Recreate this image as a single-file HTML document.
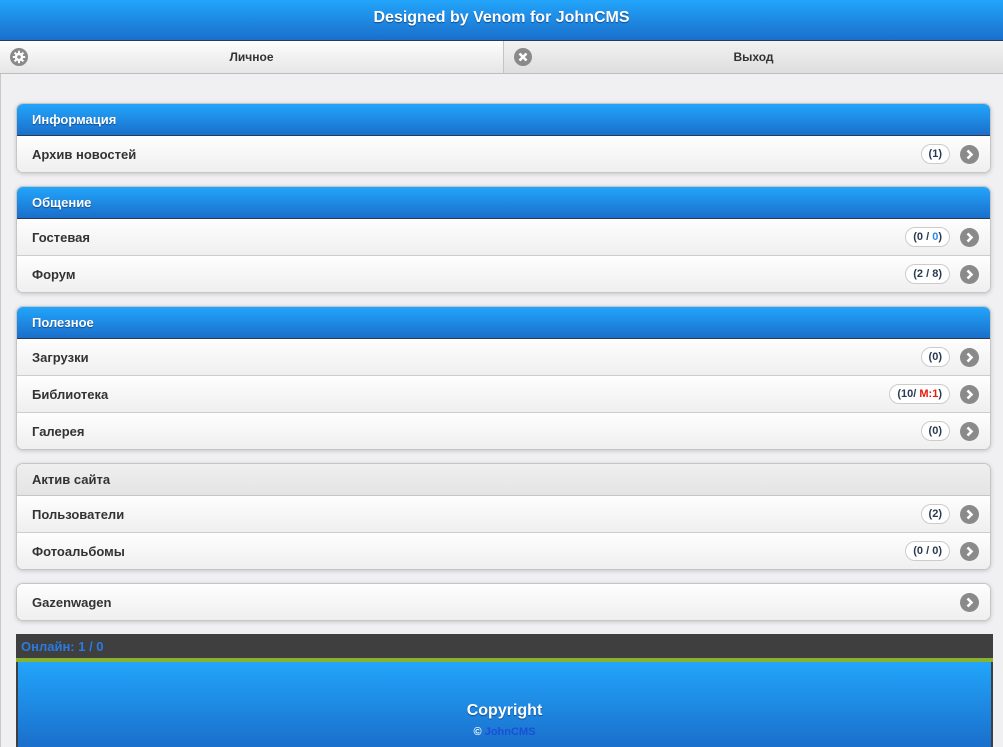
<!DOCTYPE html>
<html><head><meta charset="utf-8"><style>
*{margin:0;padding:0;box-sizing:border-box}
body{width:1003px;height:747px;overflow:hidden;background:#f0f0f2;font-family:"Liberation Sans",Arial,sans-serif;position:relative}
.abs{position:absolute}
#lb{left:0;top:74px;width:1px;height:673px;background:#c8c8c8}
#hdr{left:0;top:0;width:1003px;height:41px;background:linear-gradient(#22a5fb,#1a6fcb);border-bottom:1px solid #2a3a50;color:#fff;font-weight:bold;font-size:16px;text-align:center;line-height:36px;text-shadow:0 1px 1px #124a8a}
.nav{top:41px;height:33px;background:linear-gradient(#fdfdfd,#e6e6e6);border-bottom:1px solid #bdbdbd;font-size:12px;color:#333;text-align:center;line-height:32px;font-weight:bold}
.nav svg{position:absolute;left:10px;top:7px}
.list{left:16px;width:975px;border:1px solid #c6c6c6;border-radius:7px;overflow:hidden;box-shadow:0 1px 4px rgba(0,0,0,.18);background:#fff}
.bh{height:32px;background:linear-gradient(#22a5fb,#1a6fcb);border-bottom:1px solid #2a3a50;color:#fff;font-weight:bold;font-size:13px;line-height:31px;padding-left:15px;text-shadow:0 1px 1px #124a8a}
.gh{height:32px;background:linear-gradient(#efefef,#e4e4e4);border-bottom:1px solid #c6c6c6;color:#333;font-weight:bold;font-size:13px;line-height:31px;padding-left:15px}
.row{height:37px;background:linear-gradient(#fefefe,#efefef);border-bottom:1px solid #cdcdcd;position:relative;font-weight:bold;font-size:13px;color:#333;line-height:37px;padding-left:15px}
.row:last-child{border-bottom:none;height:36px}
.cnt{position:absolute;right:40px;top:8px;height:20px;line-height:18px;border:1px solid #ccc;border-radius:10px;background:#fff;font-size:11px;padding:0 7px;color:#2a3a50}
.arr{position:absolute;right:11px;top:9px}
#ft1{left:16px;top:634px;width:977px;height:24px;background:#3f3f3f;color:#2a7be0;font-weight:bold;font-size:13px;line-height:25px;padding-left:5px}
#ft2{left:16px;top:658px;width:977px;height:4px;background:#8bb22f}
#ft3{left:16px;top:662px;width:977px;height:85px;background:linear-gradient(#22a5fb,#1a6fcb);border-left:2px solid #3f3f3f;border-right:2px solid #3f3f3f;text-align:center;color:#fff}
</style></head><body>
<div id="lb" class="abs"></div>
<div id="hdr" class="abs">Designed by Venom for JohnCMS</div>
<div class="abs nav" style="left:0;width:504px;border-right:1px solid #c4c4c4"><svg width="18" height="18" viewBox="0 0 18 18"><circle cx="9" cy="9" r="9" fill="#8a8a8a"/><g fill="#fff"><circle cx="9" cy="9" r="4.2"/><rect x="8" y="2.8" width="2" height="12.4"/><rect x="2.8" y="8" width="12.4" height="2"/><rect x="8" y="2.8" width="2" height="12.4" transform="rotate(45 9 9)"/><rect x="8" y="2.8" width="2" height="12.4" transform="rotate(-45 9 9)"/></g><circle cx="9" cy="9" r="1.8" fill="#8a8a8a"/></svg>Личное</div>
<div class="abs nav" style="left:504px;width:499px;background:linear-gradient(#f2f2f2,#dedede)"><svg width="18" height="18" viewBox="0 0 18 18"><circle cx="9" cy="9" r="9" fill="#8a8a8a"/><path d="M5.5 5.5L12.5 12.5M12.5 5.5L5.5 12.5" stroke="#fff" stroke-width="2.6"/></svg>Выход</div>

<div class="abs list" style="top:103px"><div class="bh">Информация</div>
<div class="row">Архив новостей<span class="cnt">(1)</span><svg class="arr" width="19" height="19"><circle cx="9.5" cy="9.5" r="9.5" fill="#8a8a8a"/><path d="M7.5 5.5L11.5 9.5L7.5 13.5" stroke="#fff" stroke-width="2.6" fill="none"/></svg></div></div>

<div class="abs list" style="top:186px"><div class="bh">Общение</div>
<div class="row">Гостевая<span class="cnt">(0 / <span style="color:#2a8ae8">0</span>)</span><svg class="arr" width="19" height="19"><circle cx="9.5" cy="9.5" r="9.5" fill="#8a8a8a"/><path d="M7.5 5.5L11.5 9.5L7.5 13.5" stroke="#fff" stroke-width="2.6" fill="none"/></svg></div>
<div class="row">Форум<span class="cnt">(2 / 8)</span><svg class="arr" width="19" height="19"><circle cx="9.5" cy="9.5" r="9.5" fill="#8a8a8a"/><path d="M7.5 5.5L11.5 9.5L7.5 13.5" stroke="#fff" stroke-width="2.6" fill="none"/></svg></div></div>

<div class="abs list" style="top:306px"><div class="bh">Полезное</div>
<div class="row">Загрузки<span class="cnt">(0)</span><svg class="arr" width="19" height="19"><circle cx="9.5" cy="9.5" r="9.5" fill="#8a8a8a"/><path d="M7.5 5.5L11.5 9.5L7.5 13.5" stroke="#fff" stroke-width="2.6" fill="none"/></svg></div>
<div class="row">Библиотека<span class="cnt">(10/ <span style="color:#e8180c">M:1</span>)</span><svg class="arr" width="19" height="19"><circle cx="9.5" cy="9.5" r="9.5" fill="#8a8a8a"/><path d="M7.5 5.5L11.5 9.5L7.5 13.5" stroke="#fff" stroke-width="2.6" fill="none"/></svg></div>
<div class="row">Галерея<span class="cnt">(0)</span><svg class="arr" width="19" height="19"><circle cx="9.5" cy="9.5" r="9.5" fill="#8a8a8a"/><path d="M7.5 5.5L11.5 9.5L7.5 13.5" stroke="#fff" stroke-width="2.6" fill="none"/></svg></div></div>

<div class="abs list" style="top:463px"><div class="gh">Актив сайта</div>
<div class="row">Пользователи<span class="cnt">(2)</span><svg class="arr" width="19" height="19"><circle cx="9.5" cy="9.5" r="9.5" fill="#8a8a8a"/><path d="M7.5 5.5L11.5 9.5L7.5 13.5" stroke="#fff" stroke-width="2.6" fill="none"/></svg></div>
<div class="row">Фотоальбомы<span class="cnt">(0 / 0)</span><svg class="arr" width="19" height="19"><circle cx="9.5" cy="9.5" r="9.5" fill="#8a8a8a"/><path d="M7.5 5.5L11.5 9.5L7.5 13.5" stroke="#fff" stroke-width="2.6" fill="none"/></svg></div></div>

<div class="abs list" style="top:583px">
<div class="row">Gazenwagen<svg class="arr" width="19" height="19"><circle cx="9.5" cy="9.5" r="9.5" fill="#8a8a8a"/><path d="M7.5 5.5L11.5 9.5L7.5 13.5" stroke="#fff" stroke-width="2.6" fill="none"/></svg></div></div>

<div id="ft1" class="abs">Онлайн: 1 / 0</div>
<div id="ft2" class="abs"></div>
<div id="ft3" class="abs"><div style="font-weight:bold;font-size:16px;margin-top:40px;text-shadow:0 1px 1px #124a8a">Copyright</div><div style="font-size:11px;font-weight:bold;margin-top:6px">© <span style="color:#1a4fd8">JohnCMS</span></div></div>
</body></html>
